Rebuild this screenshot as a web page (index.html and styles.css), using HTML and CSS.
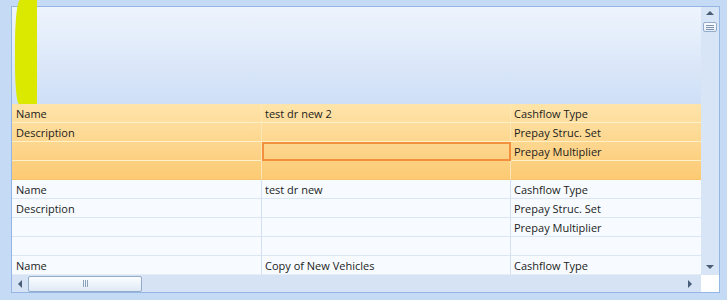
FILE: index.html
```html
<!DOCTYPE html>
<html lang="en">
<head>
    <meta charset="UTF-8">
    <title>Deal Grid</title>
    <link rel="stylesheet" href="styles.css">
</head>
<body>

<div class="frame">
    <div class="main">
        <div class="band"></div>

        <div class="group selected">
            <div class="row"><div class="cell c1">Name</div><div class="cell c2">test dr new 2</div><div class="cell c3">Cashflow Type</div></div>
            <div class="row"><div class="cell c1">Description</div><div class="cell c2"></div><div class="cell c3">Prepay Struc. Set</div></div>
            <div class="row"><div class="cell c1"></div><div class="cell c2 focus"></div><div class="cell c3">Prepay Multiplier</div></div>
            <div class="row"><div class="cell c1"></div><div class="cell c2"></div><div class="cell c3"></div></div>
        </div>

        <div class="group">
            <div class="row"><div class="cell c1">Name</div><div class="cell c2">test dr new</div><div class="cell c3">Cashflow Type</div></div>
            <div class="row"><div class="cell c1">Description</div><div class="cell c2"></div><div class="cell c3">Prepay Struc. Set</div></div>
            <div class="row"><div class="cell c1"></div><div class="cell c2"></div><div class="cell c3">Prepay Multiplier</div></div>
            <div class="row"><div class="cell c1"></div><div class="cell c2"></div><div class="cell c3"></div></div>
            <div class="row"><div class="cell c1">Name</div><div class="cell c2">Copy of New Vehicles</div><div class="cell c3">Cashflow Type</div></div>
        </div>
    </div>

    <div class="vscroll">
        <span class="arrow up"></span>
        <span class="vthumb"><i></i><i></i><i></i></span>
        <span class="spacer"></span>
        <span class="arrow down"></span>
    </div>

    <div class="hscroll">
        <span class="arrow left"></span>
        <span class="hthumb"><i></i><i></i><i></i></span>
        <span class="spacer"></span>
        <span class="arrow right"></span>
    </div>
    <div class="corner"></div>
</div>

<div class="marker"></div>

</body>
</html>
```

FILE: styles.css
```css
body {
    margin: 0;
    background-color: #c5dbf5;
    font-family: "Segoe UI", "Open Sans", sans-serif;
    font-size: 11px;
    color: #1b1b1b;
    height: 300px;
    overflow: hidden;
}
.frame {
    margin: 6px 0 0 11px;
    width: 707px;
    border: 1px solid #93b6e2;
    display: grid;
    grid-template-columns: 689px 18px;
    grid-template-rows: 268px 17px;
}
.main {
    display: flex;
    flex-direction: column;
    overflow: hidden;
}
.band {
    height: 97px;
    background: linear-gradient(#eef4fd, #cedff6);
}
.row {
    display: flex;
    height: 19px;
}
.cell {
    box-sizing: border-box;
    height: 19px;
    line-height: 19px;
    padding-left: 4px;
    border-bottom: 1px solid #dbe6f4;
    border-right: 1px solid #d2e0f1;
    white-space: nowrap;
}
.c1 { width: 250px; }
.c2 { width: 249px; padding-left: 3px; }
.c3 { width: 190px; padding-left: 3px; border-right: none; }
.group {
    background-color: #f7fbff;
}
.group .row:last-child .cell {
    border-bottom-color: #e4ecf6;
}
.group.selected {
    background: linear-gradient(#fee4aa, #fdd48a 60%, #fcca72);
}
.group.selected .cell {
    border-bottom-color: #fff0c6;
    border-right-color: #fbe6b8;
}
.group.selected .row:last-child .cell {
    border-bottom-color: #f7c46c;
}
.group.selected .cell.focus {
    border: 2px solid #f1913e;
}
.vscroll {
    background-color: #d7e5f6;
    display: flex;
    flex-direction: column;
    align-items: center;
}
.hscroll {
    background-color: #d5e3f5;
    display: flex;
    align-items: center;
    padding: 0 6px 0 6px;
}
.spacer {
    flex: 1;
}
.corner {
    background-color: #ffffff;
}
.arrow {
    width: 0;
    height: 0;
    border: 4px solid transparent;
}
.arrow.up {
    margin-top: 4px;
    border-top: none;
    border-bottom: 4px solid #4a5d78;
}
.arrow.down {
    margin-bottom: 6px;
    border-bottom: none;
    border-top: 4px solid #4a5d78;
}
.arrow.left {
    border-left: none;
    border-right: 4px solid #4a5d78;
}
.arrow.right {
    border-right: none;
    border-left: 4px solid #4a5d78;
    margin-right: 3px;
}
.vthumb {
    margin-top: 7px;
    width: 12px;
    height: 8px;
    border: 1px solid #93acc9;
    border-radius: 2px;
    background: linear-gradient(#fbfdff, #e3ecf7);
    display: flex;
    flex-direction: column;
    justify-content: center;
    align-items: center;
    gap: 1px;
}
.vthumb i {
    width: 8px;
    height: 1px;
    background-color: #7f93ad;
}
.hthumb {
    margin-left: 6px;
    width: 112px;
    height: 14px;
    border: 1px solid #93acc9;
    border-radius: 2px;
    background: linear-gradient(#fbfdff, #dfe9f6);
    display: flex;
    justify-content: center;
    align-items: center;
    gap: 1px;
}
.hthumb i {
    width: 1px;
    height: 7px;
    background-color: #8fa2bb;
}
.marker {
    position: absolute;
    left: 15px;
    top: 0;
    width: 22px;
    height: 104px;
    background-color: #dbe800;
    border-top-left-radius: 5px 45px;
    border-bottom-left-radius: 4px 40px;
}
```
